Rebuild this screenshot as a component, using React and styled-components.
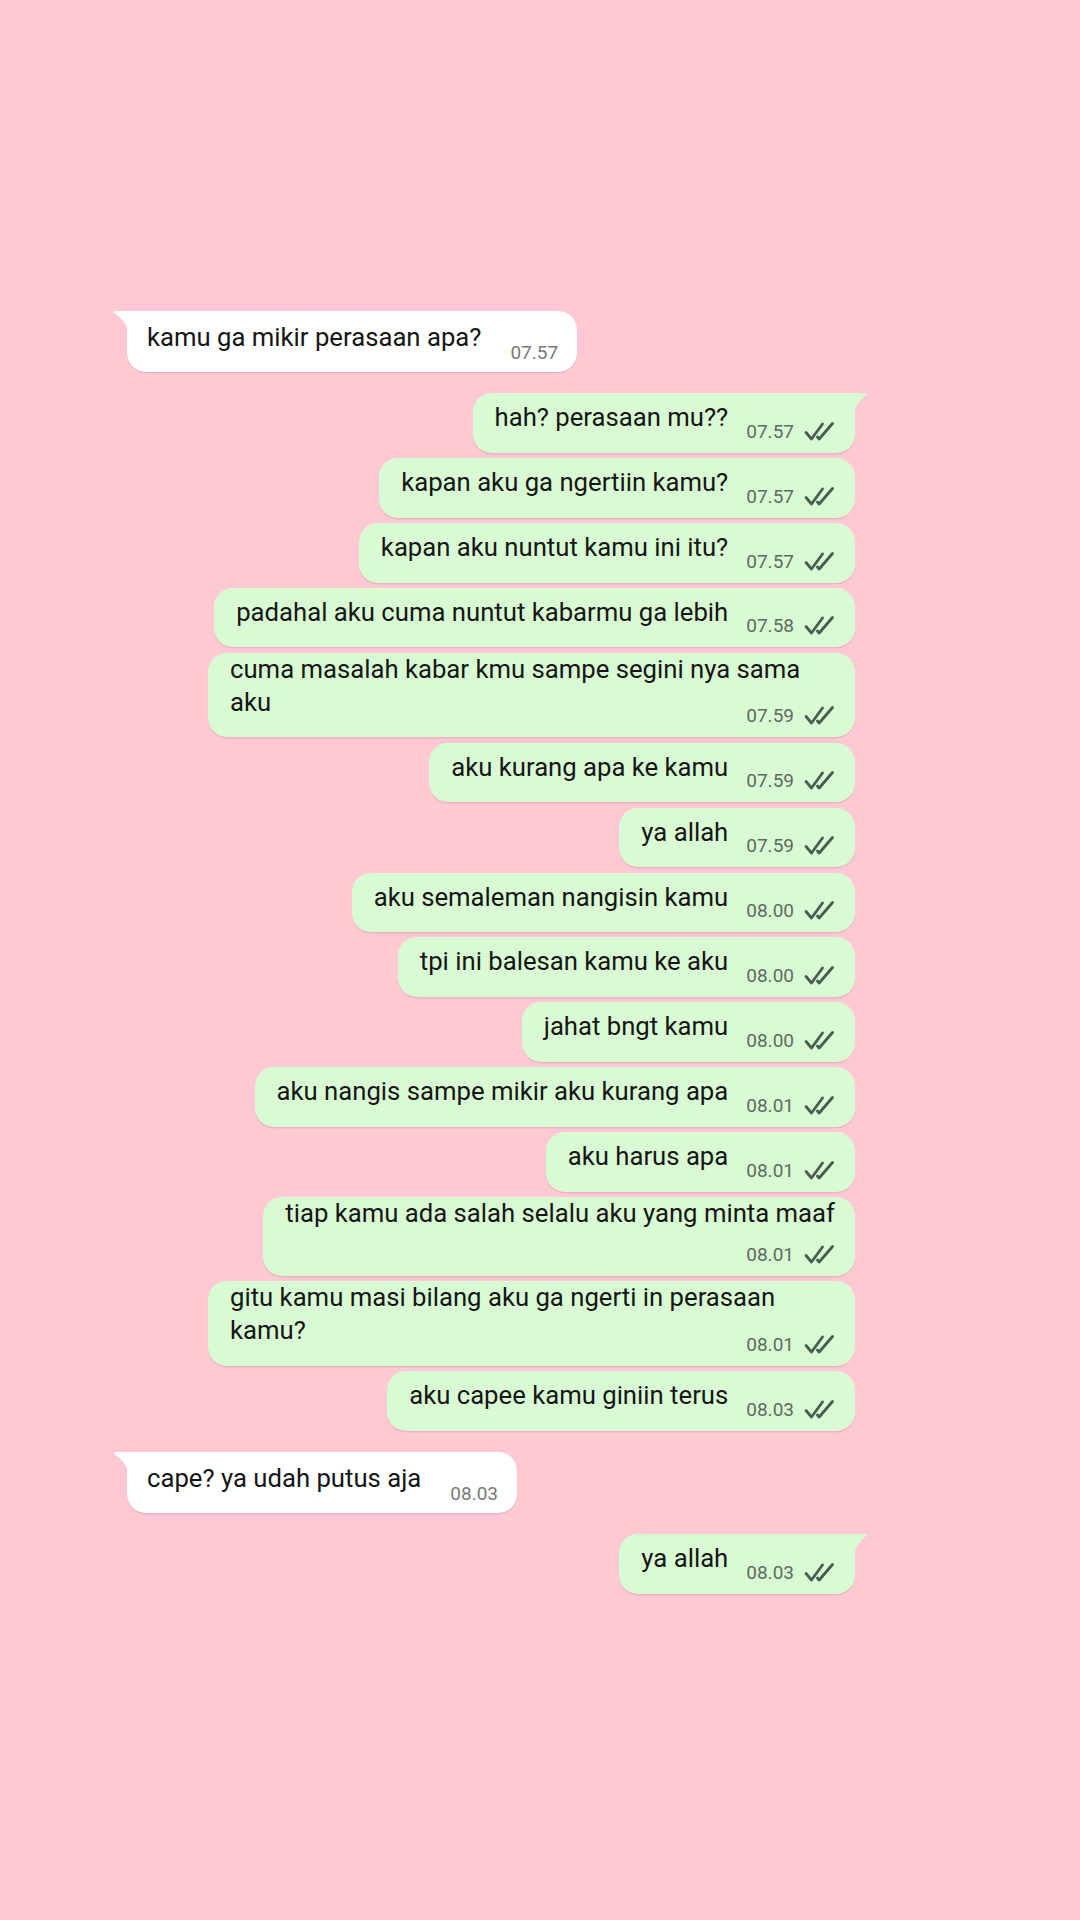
import React from "react";
import styled, { createGlobalStyle, css } from "styled-components";

const Global = createGlobalStyle`
  html, body {
    margin: 0;
    padding: 0;
    background: #ffc9d4;
  }
  body {
    font-family: Roboto, "Noto Sans", "Liberation Sans", sans-serif;
  }
`;

const Page = styled.div`
  min-height: 1920px;
  box-sizing: border-box;
  background: #ffc9d4;
  padding: 311px 225px 0 127px;
  display: flex;
  flex-direction: column;
`;

const Row = styled.div`
  display: flex;
  justify-content: ${(p) => (p.$out ? "flex-end" : "flex-start")};
  margin-top: ${(p) => (p.$first ? "21px" : "5.4px")};
  &:first-child {
    margin-top: 0;
  }
`;

const Bubble = styled.div`
  position: relative;
  display: flow-root;
  box-sizing: border-box;
  max-width: 647px;
  border-radius: 19px;
  background: ${(p) => (p.$out ? "#d9fbd3" : "#ffffff")};
  box-shadow: 0 1.5px 0.5px rgba(120, 60, 70, 0.14);
  color: #161616;
  font-size: 25.7px;
  line-height: 33px;
  padding: ${(p) =>
    p.$out
      ? `${p.$multi ? 0 : 8}px 20px 11px 22px`
      : `${p.$multi ? 0 : 10}px 19px 9px 20px`};

  ${(p) =>
    p.$first &&
    (p.$out
      ? css`
          border-top-right-radius: 0;
          &::before {
            content: "";
            position: absolute;
            top: 0;
            right: -12px;
            width: 13px;
            height: 19px;
            background: #d9fbd3;
            clip-path: path("M0 0 H12 Q13 1 12 2 Q4 8 0 19 Z");
          }
        `
      : css`
          border-top-left-radius: 0;
          &::before {
            content: "";
            position: absolute;
            top: 0;
            left: -14px;
            width: 15px;
            height: 19px;
            background: #ffffff;
            clip-path: path("M15 0 H2 Q0 1 1 2 Q11 8 15 19 Z");
          }
        `)}
`;

const Text = styled.span`
  white-space: pre-wrap;
`;

const Meta = styled.span`
  display: flex;
  align-items: center;
  justify-content: flex-end;
  gap: 10px;
  height: 21px;
  font-size: 19px;
  line-height: 21px;
  color: ${(p) => (p.$out ? "#5d6b60" : "#7a7a7a")};
  ${(p) =>
    p.$below
      ? css`
          margin-top: 14px;
        `
      : css`
          float: right;
          margin-top: ${p.$out ? "19.5px" : "21.3px"};
          margin-left: ${p.$out ? "18px" : "29px"};
        `}
`;

const Ticks = styled.svg`
  width: 31px;
  height: 19px;
  flex: none;
`;

const DoubleCheck = () => (
  <Ticks viewBox="0 0 31 19" fill="none" stroke="#4a5b4f" strokeWidth="2.8" strokeLinecap="round" strokeLinejoin="round">
    <path d="M2 10.5 L7.5 17 L18.5 2" />
    <path d="M13.5 15 L15.2 17 L28.5 1.5" />
  </Ticks>
);

const messages = [
  { out: false, first: true, text: "kamu ga mikir perasaan apa?", time: "07.57" },
  { out: true, first: true, text: "hah? perasaan mu??", time: "07.57" },
  { out: true, text: "kapan aku ga ngertiin kamu?", time: "07.57" },
  { out: true, text: "kapan aku nuntut kamu ini itu?", time: "07.57" },
  { out: true, text: "padahal aku cuma nuntut kabarmu ga lebih", time: "07.58" },
  { out: true, multi: true, text: "cuma masalah kabar kmu sampe segini nya sama aku", time: "07.59" },
  { out: true, text: "aku kurang apa ke kamu", time: "07.59" },
  { out: true, text: "ya allah", time: "07.59" },
  { out: true, text: "aku semaleman nangisin kamu", time: "08.00" },
  { out: true, text: "tpi ini balesan kamu ke aku", time: "08.00" },
  { out: true, text: "jahat bngt kamu", time: "08.00" },
  { out: true, text: "aku nangis sampe mikir aku kurang apa", time: "08.01" },
  { out: true, text: "aku harus apa", time: "08.01" },
  { out: true, multi: true, below: true, text: "tiap kamu ada salah selalu aku yang minta maaf", time: "08.01" },
  { out: true, multi: true, text: "gitu kamu masi bilang aku ga ngerti in perasaan kamu?", time: "08.01" },
  { out: true, text: "aku capee kamu giniin terus", time: "08.03" },
  { out: false, first: true, text: "cape? ya udah putus aja", time: "08.03" },
  { out: true, first: true, text: "ya allah", time: "08.03" },
];

export default function App() {
  return (
    <>
      <Global />
      <Page>
        {messages.map((m, i) => (
          <Row key={i} $out={m.out} $first={m.first}>
            <Bubble $out={m.out} $first={m.first} $multi={m.multi}>
              <Text>{m.text}</Text>
              <Meta $out={m.out} $below={m.below}>
                <span>{m.time}</span>
                {m.out && <DoubleCheck />}
              </Meta>
            </Bubble>
          </Row>
        ))}
      </Page>
    </>
  );
}
